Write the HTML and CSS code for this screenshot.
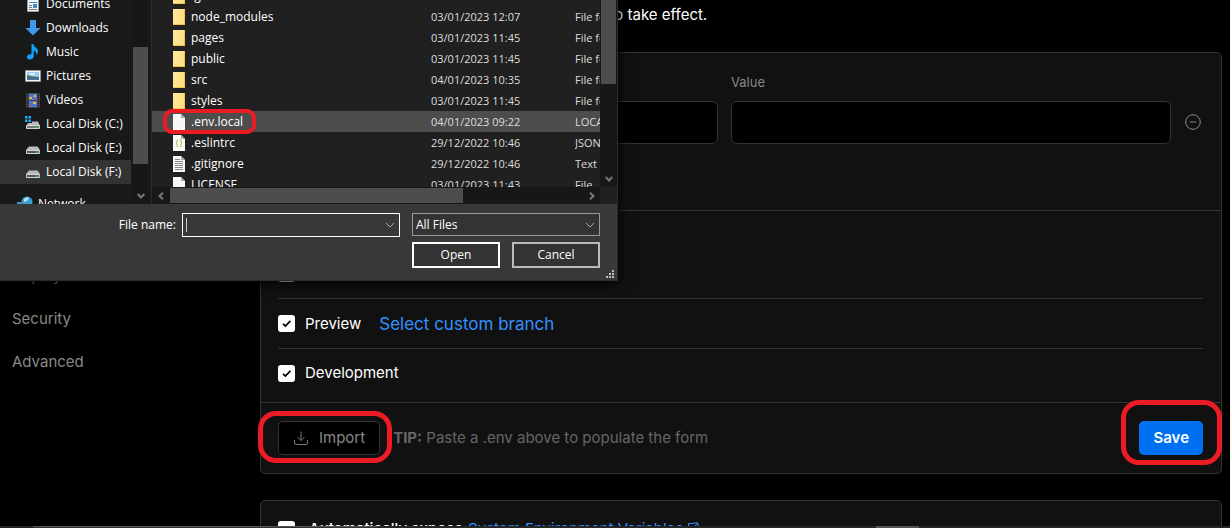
FILE: index.html
```html
<!DOCTYPE html>
<html lang="en">
<head>
<meta charset="utf-8">
<title>Environment Variables</title>
<link rel="stylesheet" href="styles.css">
</head>
<body>
<div class="page">
  <nav class="settings-nav">
    <a href="#">Deployment Protection</a>
    <a href="#">Security</a>
    <a href="#">Advanced</a>
  </nav>
  <main class="content">
    <p class="intro">A new Deployment is required for your changes to take effect.</p>
    <form class="card">
      <section class="fields">
        <label for="key">Key</label>
        <label for="value">Value</label>
        <span></span>
        <input id="key" type="text">
        <input id="value" type="text">
        <button class="remove" type="button" aria-label="Remove">
          <svg viewBox="0 0 18 18" width="18" height="18"><circle cx="9" cy="8" r="7.3"/><path d="M5.800 8h6.400"/></svg>
        </button>
      </section>
      <section class="environments">
        <div class="env"><input type="checkbox" id="prod" checked><label for="prod">Production</label></div>
        <div class="env"><input type="checkbox" id="prev" checked><label for="prev">Preview</label><a class="branch" href="#">Select custom branch</a></div>
        <div class="env"><input type="checkbox" id="dev" checked><label for="dev">Development</label></div>
      </section>
      <footer class="card-footer">
        <div class="marked">
          <button class="import" type="button">
            <svg viewBox="0 0 16 16" width="16" height="16"><path d="M8 1.500v9M4.500 7L8 10.500 11.500 7M1.500 10v3q0 1.500 1.500 1.500h10q1.500 0 1.500-1.500v-3"/></svg>
            Import
          </button>
          <span class="ring ring-import"></span>
        </div>
        <p class="tip"><b>TIP:</b> Paste a .env above to populate the form</p>
        <div class="marked">
          <button class="save" type="button">Save</button>
          <span class="ring ring-save"></span>
        </div>
      </footer>
    </form>
    <section class="card auto">
      <input type="checkbox" id="auto" checked>
      <label for="auto">Automatically expose</label>
      <a href="#">System Environment Variables
        <svg viewBox="0 0 12 12" width="12" height="12"><path d="M7 1.500H1.500v9h8V7M7 1h4v4M11 1L5.500 6.500"/></svg></a>
    </section>
  </main>
</div>

<div class="dialog" role="dialog" aria-label="Open">
  <div class="browser">
    <div class="places">
      <ul class="tree">
        <li><svg viewBox="0 0 16 16" width="16" height="16"><path fill="#f4f4f4" stroke="#999" d="M2.500.5h11v15h-11z"/><path stroke="#2a8ad4" d="M4 3.500h2M8 3.500h4M4 6.500h8"/><path stroke="#777" d="M4 9.500h3M4 11.500h3M4 13.500h8"/><path fill="#3c8dc6" d="M8 8h4v4H8z"/></svg>Documents</li>
        <li><svg viewBox="0 0 16 16" width="16" height="16"><path fill="#3d9be9" d="M5 0h6v8h4.500L8 15.500.5 8H5z"/></svg>Downloads</li>
        <li><svg viewBox="0 0 16 16" width="16" height="16"><path fill="#10a0f5" d="M6.500 0h2c0 3 4.500 4 4.500 7 0 1.500-.6 3-1.600 4 .4-2.500-.9-4-2.600-4.400V12c0 2-1.700 3.600-3.900 3.600-2 0-3.100-1.200-3.100-2.500 0-1.800 2-3.500 4.700-2.800z"/></svg>Music</li>
        <li><svg viewBox="0 0 16 16" width="16" height="16"><path fill="#f4f4f4" stroke="#999" d="M.5 2.500h15v11H.5z"/><path fill="#9ecbf0" d="M2 4h12v8H2z"/><path fill="#dcecf8" d="M4 5h6v2H4z"/><path fill="#3e7466" d="M2 7q5 2 12 2v1H2z"/><path fill="#4774a0" d="M2 10h12v2H2z"/></svg>Pictures</li>
        <li><svg viewBox="0 0 16 16" width="16" height="16"><path fill="#4a4a4a" d="M1 1h14v15H1z"/><path stroke="#171717" stroke-dasharray="1 1" stroke-width="1.500" d="M2.500 1v15M13.500 1v15"/><path fill="#4c75d7" d="M4 2h8v6H4zM4 9h8v6H4z"/><path fill="#dfbd45" d="M4 5h3v2H4zM9 3h2v2H9zM8 10h3v2H8z"/><path fill="#c74350" d="M9 6h2v2H9zM5 13h2v1H5z"/></svg>Videos</li>
        <li><svg viewBox="0 0 16 16" width="16" height="16"><path fill="#1badf0" d="M0 0h2.500v2.500H0zM3.500 0H6v2.500H3.500zM0 3.500h2.500V6H0zM3.500 3.500H6V6H3.500z"/><path fill="#b9bcbf" d="M7 5.500h6l2 4.500H1.500L3 7h4z"/><path fill="#777" stroke="#d5d5d5" d="M1.500 9.500h13v3h-13z"/><path fill="#18d432" d="M11 10.500h2v1.500h-2z"/></svg>Local Disk (C:)</li>
        <li><svg viewBox="0 0 16 16" width="16" height="16"><path fill="#b9bcbf" d="M4 6.500h8.500L15 10H1z"/><path fill="#555" stroke="#d5d5d5" d="M1.500 10.500h13v3h-13z"/><path fill="#18d432" d="M11 11.500h2V13h-2z"/></svg>Local Disk (E:)</li>
        <li class="current"><svg viewBox="0 0 16 16" width="16" height="16"><path fill="#b9bcbf" d="M4 6.500h8.500L15 10H1z"/><path fill="#555" stroke="#d5d5d5" d="M1.500 10.500h13v3h-13z"/><path fill="#18d432" d="M11 11.500h2V13h-2z"/></svg>Local Disk (F:)</li>
        <li class="network"><svg viewBox="0 0 16 16" width="16" height="16"><circle cx="10" cy="6" r="5.500" fill="#3b9fcb"/><path fill="#b4e1f4" d="M7 3q3-3 5-1l-2 3-3 1z"/><path fill="#4d94bd" d="M0 6h8v5H0z"/></svg>Network</li>
      </ul>
      <div class="vbar nav-bar"><span class="thumb"></span><svg class="arrow" viewBox="0 0 8 6" width="8" height="6"><path d="M.7 1L4 4.500 7.300 1"/></svg></div>
    </div>
    <div class="files">
      <div class="rows">
        <table>
          <tbody>
            <tr><td><span class="folder"></span>.git</td><td>03/01/2023 12:07</td><td>File folder</td></tr>
            <tr><td><span class="folder"></span>node_modules</td><td>03/01/2023 12:07</td><td>File folder</td></tr>
            <tr><td><span class="folder"></span>pages</td><td>03/01/2023 11:45</td><td>File folder</td></tr>
            <tr><td><span class="folder"></span>public</td><td>03/01/2023 11:45</td><td>File folder</td></tr>
            <tr><td><span class="folder"></span>src</td><td>04/01/2023 10:35</td><td>File folder</td></tr>
            <tr><td><span class="folder"></span>styles</td><td>03/01/2023 11:45</td><td>File folder</td></tr>
            <tr class="selected"><td><svg viewBox="0 0 12 16" width="12" height="16"><path fill="#f8f8f8" d="M0 0h8l4 4v12H0z"/><path fill="#aaa" d="M8 0l4 4H8z"/></svg>.env.local<span class="ring ring-file"></span></td><td>04/01/2023 09:22</td><td>LOCAL File</td></tr>
            <tr><td><svg viewBox="0 0 12 16" width="12" height="16"><path fill="#f8f8f8" d="M0 0h8l4 4v12H0z"/><path fill="#aaa" d="M8 0l4 4H8z"/><path fill="none" stroke="#b9b345" d="M5 5H4v2.500l-1 .7 1 .8v2.500h1M7 5h1v2.500l1 .7-1 .8v2.500H7"/></svg>.eslintrc</td><td>29/12/2022 10:46</td><td>JSON File</td></tr>
            <tr><td><svg viewBox="0 0 12 16" width="12" height="16"><path fill="#f8f8f8" d="M0 0h8l4 4v12H0z"/><path fill="#aaa" d="M8 0l4 4H8z"/><path stroke="#888" d="M2 3.500h5M2 5.500h8M2 7.500h8M2 9.500h8M2 11.500h8M2 13.500h8"/></svg>.gitignore</td><td>29/12/2022 10:46</td><td>Text Document</td></tr>
            <tr><td><svg viewBox="0 0 12 16" width="12" height="16"><path fill="#f8f8f8" d="M0 0h8l4 4v12H0z"/><path fill="#aaa" d="M8 0l4 4H8z"/></svg>LICENSE</td><td>03/01/2023 11:43</td><td>File</td></tr>
          </tbody>
        </table>
      </div>
      <div class="vbar file-bar"><span class="thumb"></span><svg class="arrow" viewBox="0 0 8 6" width="8" height="6"><path d="M.7 1L4 4.500 7.300 1"/></svg></div>
      <div class="hbar"><svg class="arrow" viewBox="0 0 6 8" width="6" height="8"><path d="M5 .7L1.500 4 5 7.300"/></svg><span class="track"><span class="thumb"></span></span><svg class="arrow" viewBox="0 0 6 8" width="6" height="8"><path d="M1 .7L4.500 4 1 7.300"/></svg></div>
    </div>
  </div>
  <div class="dialog-footer">
    <label for="filename">File name:</label>
    <div class="combo">
      <span class="caret"></span>
      <input id="filename" type="text">
      <svg viewBox="0 0 10 6" width="10" height="6"><path d="M1 1l4 4 4-4"/></svg>
    </div>
    <div class="actions">
      <select aria-label="File type"><option>All Files</option></select>
      <button class="open" type="button">Open</button>
      <button type="button">Cancel</button>
    </div>
    <svg class="grip" viewBox="0 0 8 8" width="8" height="8"><path d="M6 0h2v2H6zM3 3h2v2H3zM6 3h2v2H6zM0 6h2v2H0zM3 6h2v2H3zM6 6h2v2H6z"/></svg>
  </div>
</div>
<div class="taskbar"><span class="app"></span><span class="tray"></span></div>
</body>
</html>
```

FILE: styles.css
```css
* { box-sizing: border-box; }
html, body { height: 100%; }
body {
  margin: 0;
  overflow: hidden;
  background: #000;
  color: #fff;
  font: 15px/24px Inter, "Liberation Sans", sans-serif;
}
a { text-decoration: none; color: #3291ff; }
p { margin: 0; }
button, input, select { font: inherit; color: inherit; margin: 0; }
svg { flex: none; }

/* Settings page */
.page {
  display: grid;
  grid-template-columns: 260px 1fr;
  height: 100%;
  padding-right: 8px;
  overflow: hidden;
}
.settings-nav {
  display: flex;
  flex-direction: column;
  gap: 19px;
  padding: 264px 12px 0;
}
.settings-nav a { color: #888; }
.content { display: flex; flex-direction: column; }
.intro { padding: 3px 8px 25px; }
.card {
  flex: none;
  background: #111;
  border: 1px solid #333;
  border-radius: 5px;
}
.fields {
  display: grid;
  grid-template-columns: 1fr 1fr 18px;
  column-gap: 13px;
  row-gap: 7px;
  align-items: center;
  padding: 17px 19px 66px 17px;
  border-bottom: 1px solid #333;
}
.fields label { font-size: 13px; line-height: 24px; color: #888; }
.fields input {
  width: 100%;
  height: 43px;
  padding: 0 12px;
  background: #000;
  border: 1px solid #333;
  border-radius: 6px;
}
.remove {
  display: flex;
  padding: 0;
  background: none;
  border: 0;
}
.remove svg { fill: none; stroke: #888; }
.environments { padding: 38px 18px 5px 17px; }
.env {
  display: flex;
  align-items: center;
  height: 50px;
  border-bottom: 1px solid #333;
}
.env:last-child { border-bottom: 0; height: 48px; }
.env label { margin-left: 10px; }
.branch { margin-left: 18px; font-size: 17px; }
input[type="checkbox"] {
  appearance: none;
  flex: none;
  width: 17px;
  height: 17px;
  border-radius: 3px;
  background: #fff url("data:image/svg+xml,%3Csvg xmlns='http://www.w3.org/2000/svg' viewBox='0 0 17 17'%3E%3Cpath d='M5 8.800l2.400 2.200 5-5.200' fill='none' stroke='%23000' stroke-width='1.700'/%3E%3C/svg%3E");
}
.card-footer {
  display: flex;
  align-items: center;
  padding: 18px 18px 18px 17px;
  border-top: 1px solid #333;
}
.marked { position: relative; }
.import, .save {
  display: flex;
  align-items: center;
  height: 34px;
  border-radius: 5px;
}
.import {
  gap: 10px;
  padding: 0 14px;
  background: #000;
  border: 1px solid #333;
  color: #888;
}
.import svg { fill: none; stroke: #777; }
.save {
  padding: 0 14px;
  background: #0070f3;
  border: 0;
  font-weight: 600;
}
.tip { flex: 1; margin-left: 13px; color: #666; }
.auto {
  display: flex;
  align-items: center;
  margin-top: 26px;
  padding: 16px 17px;
}
.auto label { margin: 0 5px 0 14px; font-weight: 500; }
.auto svg { fill: none; stroke: #3291ff; }

/* Hand-drawn highlight marks */
.ring {
  position: absolute;
  border: 5px solid #ed1c24;
  border-radius: 18px;
  pointer-events: none;
}
.ring-import { inset: -10px -12px -8px -20px; }
.ring-save { inset: -21px -19px -10px -18px; }
.ring-file { border-width: 4px; border-radius: 9px; inset: -2px auto -2px 11px; width: 93px; }

/* File dialog */
.dialog {
  position: absolute;
  top: 0;
  left: 0;
  width: 618px;
  background: #383838;
  border: solid #2b2b2b;
  border-width: 0 1px 1px 0;
  font: 12px/16px "Open Sans", "Noto Sans", sans-serif;
  box-shadow: 0 2px 12px #000;
}
.browser { display: flex; height: 204px; }
.places {
  display: flex;
  width: 152px;
  background: #191919;
  border-right: 1px solid #2b2b2b;
  overflow: hidden;
}
.tree { flex: 1; margin: -8px 2px 0 0; padding: 0; list-style: none; white-space: nowrap; }
.tree li { display: flex; align-items: center; gap: 5px; height: 24px; padding-left: 25px; }
.tree .current { background: #333; }
.tree .network { margin-top: 8px; padding-left: 17px; }
.vbar { display: flex; flex-direction: column; align-items: center; justify-content: space-between; background: #171717; }
.nav-bar { width: 15px; margin-right: 3px; padding: 47px 0 5px; }
.thumb { display: block; background: #4d4d4d; }
.vbar .thumb { width: 100%; }
.nav-bar .thumb { height: 117px; }
.arrow { fill: none; stroke: #777; stroke-width: 2; }
.files {
  flex: 1;
  display: grid;
  grid-template: 187px 17px / 1fr 17px;
  background: #202020;
  min-width: 0;
}
.rows { overflow: hidden; position: relative; }
.rows table { width: 100%; margin-top: -15px; table-layout: fixed; border-collapse: collapse; }
.rows tr { height: 21px; }
.rows td { padding: 0; height: 21px; overflow: hidden; white-space: nowrap; color: #ddd; font-size: 11px; }
.rows td:first-child { width: 279px; padding: 1px 0 0 21px; color: #fff; font-size: 12px; position: relative; overflow: visible; }
.rows td:nth-child(2) { width: 144px; }
.rows td svg, .folder { display: inline-block; vertical-align: middle; width: 12px; height: 16px; margin-right: 6px; }
.folder {
  background: linear-gradient(100deg, #ffe9a0, #ffdc7c);
  border: solid #efc64c;
  border-width: 0 1px 1px 0;
}
.selected { background: #4d4d4d; }
.file-bar { padding-bottom: 5px; }
.file-bar .thumb { height: 84px; width: 15px; }
.hbar { display: flex; align-items: center; justify-content: space-between; padding: 0 5px 0 6px; background: #171717; }
.track { flex: 1; margin: 0 6px; }
.hbar .thumb { width: 71%; height: 15px; }
.dialog-footer {
  position: relative;
  display: flex;
  align-items: flex-start;
  justify-content: flex-end;
  padding: 9px 17px 12px;
}
.dialog-footer > label { margin: 4px 6px 0 0; }
.combo {
  display: flex;
  align-items: center;
  width: 218px;
  height: 24px;
  margin-right: 12px;
  padding: 0 4px 0 3px;
  border: 1px solid #fff;
}
.combo input { flex: 1; min-width: 0; padding: 0; background: none; border: 0; outline: 0; }
.combo svg { fill: none; stroke: #aaa; }
.caret { width: 1px; height: 14px; background: #ccc; }
.actions { display: grid; grid-template-columns: 88px 88px; gap: 6px 12px; }
.actions select {
  grid-column: 1 / 3;
  appearance: none;
  height: 23px;
  padding: 0 3px;
  border: 1px solid #999;
  border-radius: 0;
  background: #333 url("data:image/svg+xml,%3Csvg xmlns='http://www.w3.org/2000/svg' width='10' height='6'%3E%3Cpath d='M1 1l4 4 4-4' fill='none' stroke='%23aaa'/%3E%3C/svg%3E") no-repeat right 4px center;
}
.actions button { height: 26px; padding: 0; background: #333; border: 2px solid #bbb; }
.actions .open { border-color: #fff; }
.grip { position: absolute; right: 3px; bottom: 2px; fill: #bbb; }

/* Top edge of the desktop taskbar */
.taskbar { position: fixed; left: 0; right: 0; bottom: 0; display: flex; height: 2px; background: #262626; }
.app { width: 344px; margin-left: 33px; background: #333; border-top: 1px solid #555; }
.tray { width: 43px; margin-left: 499px; background: #555; }
```
